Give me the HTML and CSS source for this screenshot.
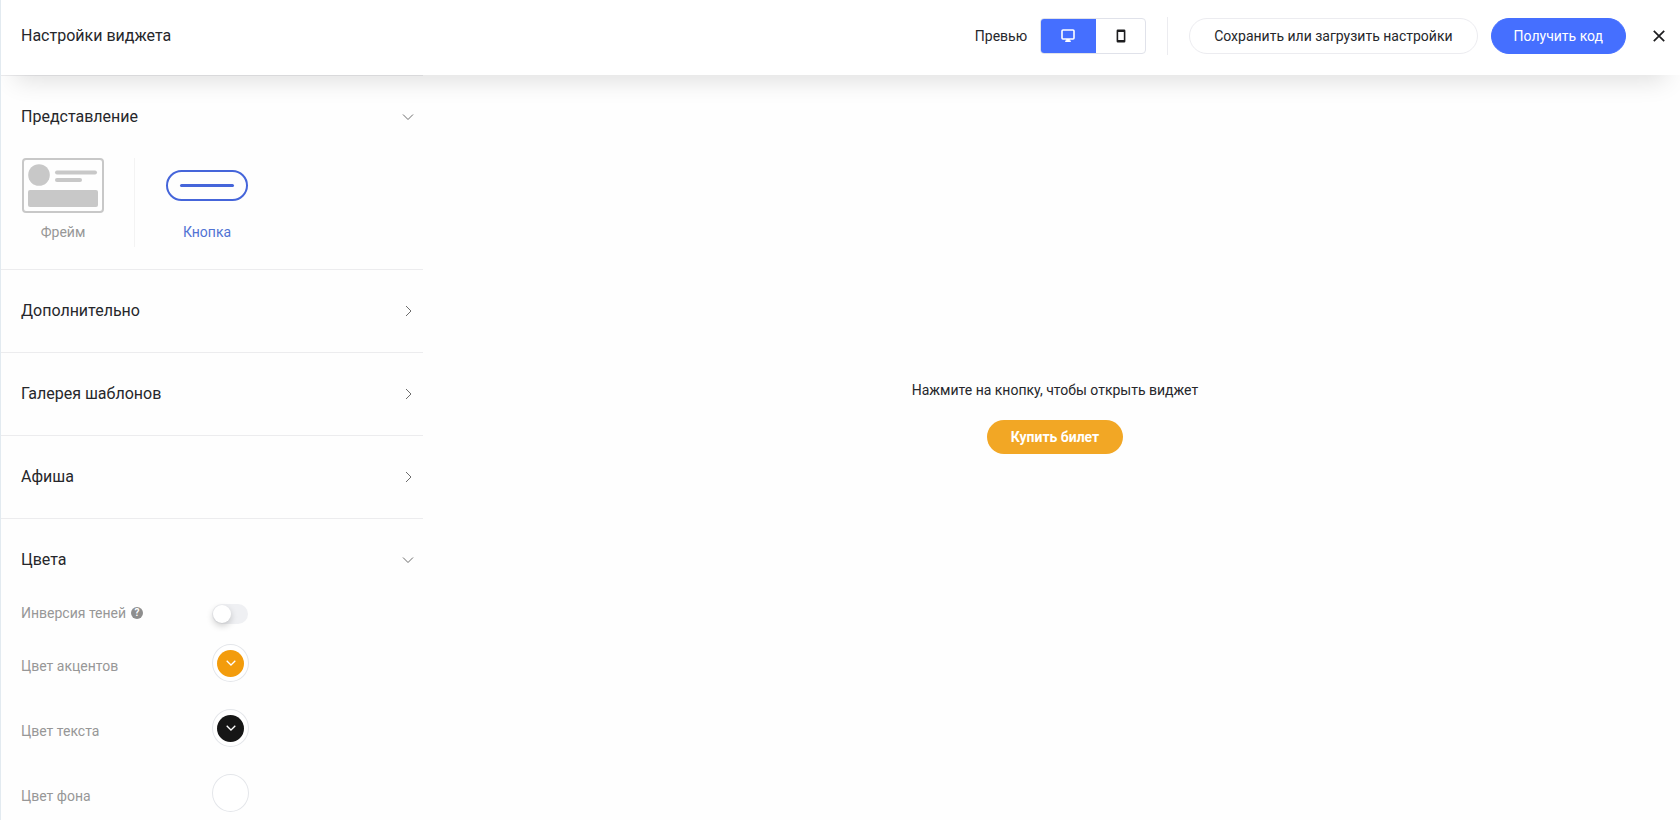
FILE: index.html
```html
<!DOCTYPE html>
<html lang="ru">
<head>
<meta charset="utf-8">
<title>Настройки виджета</title>
<link rel="stylesheet" href="styles.css">
</head>
<body>
<div class="app">
  <header class="topbar">
    <h1 class="topbar-title">Настройки виджета</h1>
    <div class="preview-switch">
      <span>Превью</span>
      <div class="segmented" role="group" aria-label="Превью">
        <button class="segment segment-active" type="button" aria-label="Компьютер">
          <svg width="14" height="14" viewBox="0 0 14 14"><rect x="1" y="1" width="12" height="9" rx="1" fill="none" stroke="#fff" stroke-width="1.6"/><path d="M5.2 10h3.6v1.6h1v1.4H4.2v-1.4h1z" fill="#fff"/></svg>
        </button>
        <button class="segment" type="button" aria-label="Телефон">
          <svg width="10" height="14" viewBox="0 0 10 14"><path fill="#1d1d1f" fill-rule="evenodd" d="M1.8.5h6.4Q9.4.5 9.4 1.7v10.6q0 1.200-1.200 1.200H1.800Q.6 13.500.6 12.300V1.700Q.6.5 1.800.5zM2.200 3v8h5.600V3z"/></svg>
        </button>
      </div>
    </div>
    <div class="actions">
      <button class="btn btn-outline" type="button">Сохранить или загрузить настройки</button>
      <button class="btn btn-primary" type="button">Получить код</button>
    </div>
    <button class="close" type="button" aria-label="Закрыть">
      <svg width="12" height="12" viewBox="0 0 12 12"><path d="M.8.800l10.400 10.400M11.200.800.800 11.200" fill="none" stroke="#1d1d1f" stroke-width="1.700"/></svg>
    </button>
  </header>
  <div class="body">
    <aside class="sidebar">
      <section class="section">
        <button class="section-head" type="button" aria-expanded="true">Представление
          <svg width="12" height="12" viewBox="0 0 12 12"><path d="M1 3.500l5 5 5-5"/></svg>
        </button>
        <div class="views">
          <button class="view" type="button">
            <svg width="82" height="55" viewBox="0 0 82 55"><rect x="1" y="1" width="80" height="53" rx="3" fill="none" stroke="#c8c8c8" stroke-width="2"/><circle cx="17" cy="17" r="10.800" fill="#c8c8c8"/><rect x="33" y="12.500" width="42" height="4" rx="2" fill="#c8c8c8"/><rect x="33" y="20" width="27" height="4" rx="2" fill="#c8c8c8"/><rect x="6" y="32" width="70" height="17" rx="2" fill="#c8c8c8"/></svg>
            Фрейм
          </button>
          <button class="view view-active" type="button">
            <svg width="82" height="55" viewBox="0 0 82 55"><rect x="1" y="13" width="80" height="29" rx="14.500" fill="none" stroke="#4565da" stroke-width="2"/><rect x="14" y="26" width="54" height="3" rx="1.500" fill="#4565da"/></svg>
            Кнопка
          </button>
        </div>
      </section>
      <section class="section">
        <button class="section-head" type="button">Дополнительно
          <svg width="12" height="12" viewBox="0 0 12 12"><path d="M4 1l5 5-5 5"/></svg>
        </button>
      </section>
      <section class="section">
        <button class="section-head" type="button">Галерея шаблонов
          <svg width="12" height="12" viewBox="0 0 12 12"><path d="M4 1l5 5-5 5"/></svg>
        </button>
      </section>
      <section class="section">
        <button class="section-head" type="button">Афиша
          <svg width="12" height="12" viewBox="0 0 12 12"><path d="M4 1l5 5-5 5"/></svg>
        </button>
      </section>
      <section class="section">
        <button class="section-head" type="button" aria-expanded="true">Цвета
          <svg width="12" height="12" viewBox="0 0 12 12"><path d="M1 3.500l5 5 5-5"/></svg>
        </button>
        <div class="fields">
          <div class="field field-toggle">
            <label class="field-label" for="invert">Инверсия теней <span class="help">?</span></label>
            <input class="toggle" id="invert" type="checkbox">
          </div>
          <div class="field">
            <span class="field-label" id="accent">Цвет акцентов</span>
            <button class="swatch" type="button" aria-labelledby="accent"><span class="dot dot-accent"><svg width="10" height="6" viewBox="0 0 10 6"><path d="M.7.700 5 5 9.300.700"/></svg></span></button>
          </div>
          <div class="field">
            <span class="field-label" id="text">Цвет текста</span>
            <button class="swatch" type="button" aria-labelledby="text"><span class="dot dot-text"><svg width="10" height="6" viewBox="0 0 10 6"><path d="M.7.700 5 5 9.300.700"/></svg></span></button>
          </div>
          <div class="field">
            <span class="field-label" id="background">Цвет фона</span>
            <button class="swatch" type="button" aria-labelledby="background"><span class="dot"></span></button>
          </div>
        </div>
      </section>
    </aside>
    <main class="stage">
      <p class="hint">Нажмите на кнопку, чтобы открыть виджет</p>
      <button class="buy" type="button">Купить билет</button>
    </main>
  </div>
</div>
</body>
</html>
```
FILE: styles.css
```css
* { box-sizing: border-box; }

body {
  margin: 0;
  background: #fefefe;
  color: #26272b;
  font: 14px/24px Roboto, sans-serif;
}

button {
  margin: 0;
  padding: 0;
  border: 0;
  background: none;
  color: inherit;
  font: inherit;
  cursor: pointer;
}

svg { display: block; flex: none; }

.app {
  display: flex;
  flex-direction: column;
  height: 100vh;
  border-left: 1px solid #e2eaf0;
  overflow: hidden;
}

.topbar {
  position: relative;
  z-index: 1;
  display: flex;
  align-items: center;
  flex: none;
  padding: 17px 15px 20px 20px;
  background: #fff;
  box-shadow: 0 20px 24px -14px rgba(0, 0, 0, .12);
}

.topbar-title {
  margin: 0 auto 0 0;
  font-size: 16px;
  font-weight: 400;
}

.preview-switch {
  display: flex;
  align-items: center;
  gap: 13px;
  height: 38px;
  padding-right: 21px;
  border-right: 1px solid #ececf0;
}

.segmented {
  display: flex;
  height: 36px;
  border: 1px solid #e0e2ea;
  border-radius: 4px;
  overflow: hidden;
}

.segment {
  display: flex;
  align-items: center;
  justify-content: center;
  width: 49px;
}

.segment-active {
  width: 56px;
  margin: -1px 0 -1px -1px;
  background: #456fff;
}

.actions {
  display: flex;
  gap: 13px;
  margin: 0 27px 0 21px;
}

.btn {
  height: 36px;
  padding: 0 24px;
  border: 1px solid #ececf0;
  border-radius: 18px;
}

.btn-primary {
  padding: 0 22px;
  border-color: #456fff;
  background: #456fff;
  color: #fff;
}

.body {
  display: flex;
  flex: 1;
  min-height: 0;
}

.sidebar {
  flex: none;
  width: 429px;
  padding-right: 7px;
  overflow: hidden;
}

.section { border-top: 1px solid #ececee; }

.section-head {
  display: flex;
  align-items: center;
  justify-content: space-between;
  width: 100%;
  height: 82px;
  padding: 0 9px 0 20px;
  font-size: 16px;
}

.section-head path {
  fill: none;
  stroke: #6c6c6c;
}

.views {
  display: flex;
  padding: 0 21px 22px;
}

.view {
  display: flex;
  flex-direction: column;
  align-items: center;
  gap: 7px;
  padding-bottom: 3px;
  color: #979797;
}

.view + .view {
  margin-left: 30px;
  padding-left: 31px;
  border-left: 1px solid #f3f3f3;
}

.view-active { color: #5173d4; }

.fields {
  display: flex;
  flex-direction: column;
  gap: 27px;
}

.field {
  display: grid;
  grid-template-columns: 191px auto;
  align-items: center;
  justify-content: start;
  padding-left: 20px;
  color: #979797;
}

.field-toggle { margin-bottom: -8px; }

.field-label {
  display: flex;
  align-items: center;
  gap: 5px;
}

.field:not(.field-toggle) .field-label { padding-top: 5px; }

.help {
  width: 12px;
  height: 12px;
  border-radius: 50%;
  background: #8e8e8e;
  color: #fff;
  font-size: 10px;
  font-weight: 700;
  line-height: 12px;
  text-align: center;
}

.toggle {
  appearance: none;
  width: 36px;
  height: 20px;
  margin: 2px 0 0;
  border-radius: 10px;
  background: #eff0f3;
}

.toggle::before {
  content: "";
  display: block;
  width: 18px;
  height: 18px;
  margin: 1px;
  border-radius: 50%;
  background: #fff;
  box-shadow: 0 3px 7px rgba(0, 0, 0, .2);
}

.swatch {
  display: flex;
  align-items: center;
  justify-content: center;
  width: 37px;
  height: 38px;
  border: 1px solid #e4e6ea;
  border-radius: 50%;
  background: #fff;
}

.dot {
  display: flex;
  align-items: center;
  justify-content: center;
  width: 27px;
  height: 27px;
  border-radius: 50%;
}

.dot-accent { background: #f39c0c; }
.dot-text { background: #161616; }

.dot path {
  fill: none;
  stroke: #fff;
  stroke-width: 1.3;
}

.stage {
  display: flex;
  flex: 1;
  flex-direction: column;
  align-items: center;
  justify-content: center;
  gap: 18px;
  padding-bottom: 64px;
}

.hint { margin: 0; }

.buy {
  height: 34px;
  padding: 0 24px;
  border-radius: 17px;
  background: #f2a725;
  color: #fff;
  font-weight: 700;
}
```
